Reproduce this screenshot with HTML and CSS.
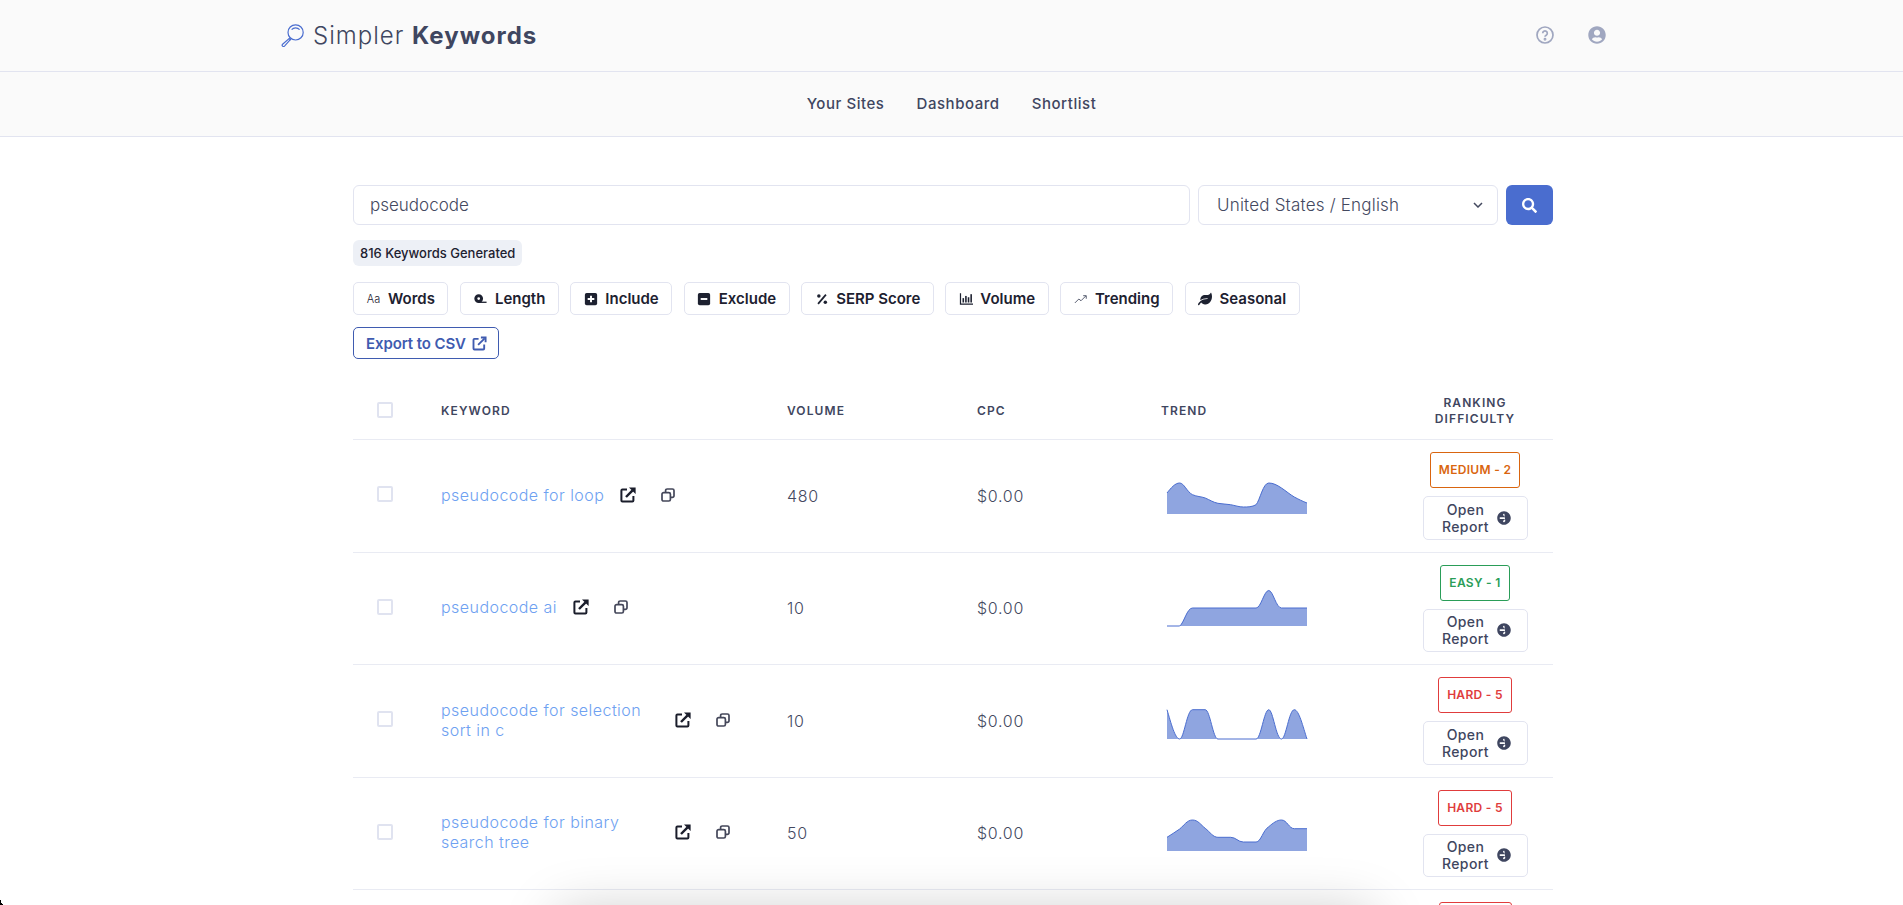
FILE: index.html
```html
<!DOCTYPE html>
<html lang="en">

<head>
    <meta charset="UTF-8">
    <meta name="viewport" content="width=device-width, initial-scale=1.0">
    <title>Simpler Keywords</title>
    <link rel="stylesheet" href="styles.css">
</head>

<body>
    <!-- Top bar -->
    <header class="topbar">
        <a class="logo">
            <svg class="logo-icon" viewBox="0 0 23 23" fill="none" stroke="#4a6dcf" stroke-width="1.2">
                <circle cx="14.6" cy="8.4" r="7.6"/>
                <path d="M10.6 5.6a5.4 5.4 0 0 1 8 0"/>
                <path d="M9.2 13.6l-7.6 6.6a1.3 1.3 0 0 0 1.9 1.9l6.7-7.4"/>
                <path d="M8.2 14.6l1.6 1.6"/>
            </svg>
            <span>Simpler <b>Keywords</b></span>
        </a>
        <div class="topbar-icons">
            <svg class="top-icon" viewBox="0 0 18 18" fill="none" stroke="#a0a7c0" stroke-width="1.7">
                <circle cx="9" cy="9" r="8"/>
                <path d="M6.7 7.2a2.3 2.3 0 1 1 3.5 2c-.8.5-1.2.9-1.2 1.6"/>
                <circle cx="9" cy="13.2" r=".6"/>
            </svg>
            <svg class="top-icon" viewBox="0 0 496 512" fill="#a0a7c0">
                <path d="M248 8C111 8 0 119 0 256s111 248 248 248 248-111 248-248S385 8 248 8zm0 96c48.6 0 88 39.4 88 88s-39.4 88-88 88-88-39.4-88-88 39.4-88 88-88zm0 344c-58.7 0-111.3-26.6-146.5-68.2 18.8-35.4 55.6-59.8 98.5-59.8 2.4 0 4.8.4 7.1 1.1 13 4.2 26.6 6.9 40.9 6.9 14.3 0 28-2.7 40.9-6.9 2.3-.7 4.7-1.1 7.1-1.1 42.9 0 79.7 24.4 98.5 59.8C359.3 421.4 306.7 448 248 448z"/>
            </svg>
        </div>
    </header>

    <nav class="subnav">
        <a>Your Sites</a>
        <a>Dashboard</a>
        <a>Shortlist</a>
    </nav>

    <main class="content">
        <!-- Search -->
        <div class="search-row">
            <input class="search-input" type="text" value="pseudocode">
            <div class="select-wrap">
                <select class="country-select">
                    <option>United States / English</option>
                </select>
                <svg class="chevron" viewBox="0 0 10 6" fill="none" stroke="#44495f" stroke-width="1.5">
                    <path d="M1 1l4 4 4-4"/>
                </svg>
            </div>
            <button class="search-btn">
                <svg viewBox="0 0 512 512" fill="#fff">
                    <path d="M505 442.7L405.3 343c-4.5-4.5-10.6-7-17-7H372c27.6-35.3 44-79.7 44-128C416 93.1 322.9 0 208 0S0 93.1 0 208s93.1 208 208 208c48.3 0 92.7-16.4 128-44v16.3c0 6.4 2.5 12.5 7 17l99.7 99.7c9.4 9.4 24.6 9.4 33.9 0l28.3-28.3c9.4-9.4 9.4-24.6.1-34zM208 336c-70.7 0-128-57.2-128-128 0-70.7 57.2-128 128-128 70.7 0 128 57.2 128 128 0 70.7-57.2 128-128 128z"/>
                </svg>
            </button>
        </div>

        <div class="count-badge">816 Keywords Generated</div>

        <!-- Filters -->
        <div class="filters">
            <button class="filter-btn"><span class="aa">Aa</span>Words</button>
            <button class="filter-btn">
                <svg class="filter-icon" viewBox="0 0 16 16" fill="#1d2130">
                    <path fill-rule="evenodd" d="M6.5 2.5a5 5 0 1 1 0 10 5 5 0 0 1 0-10zm0 3.4a1.6 1.6 0 1 0 0 3.2 1.6 1.6 0 0 0 0-3.2z"/>
                    <rect x="6.5" y="11" width="9" height="1.5"/>
                </svg>Length
            </button>
            <button class="filter-btn">
                <svg class="filter-icon" viewBox="0 0 16 16">
                    <rect x="1" y="1" width="14" height="14" rx="2" fill="#1d2130"/>
                    <path d="M8 4.2v7.6M4.2 8h7.6" stroke="#fff" stroke-width="2.2"/>
                </svg>Include
            </button>
            <button class="filter-btn">
                <svg class="filter-icon" viewBox="0 0 16 16">
                    <rect x="1" y="1" width="14" height="14" rx="2" fill="#1d2130"/>
                    <path d="M4.2 8h7.6" stroke="#fff" stroke-width="2.2"/>
                </svg>Exclude
            </button>
            <button class="filter-btn">
                <svg class="filter-icon" viewBox="0 0 16 16" fill="#1d2130">
                    <path d="M3.5 13.5L12.5 3" stroke="#1d2130" stroke-width="2"/>
                    <circle cx="4.4" cy="4.6" r="2"/>
                    <circle cx="11.8" cy="11.8" r="2"/>
                </svg>SERP Score
            </button>
            <button class="filter-btn">
                <svg class="filter-icon" viewBox="0 0 16 16" fill="#1d2130">
                    <path d="M1 1.5h1.4v11.6H16v1.4H1z"/>
                    <rect x="4" y="7" width="1.8" height="5"/>
                    <rect x="7" y="4.5" width="1.8" height="7.5"/>
                    <rect x="10" y="6" width="1.8" height="6"/>
                    <rect x="13" y="2.5" width="1.8" height="9.5"/>
                </svg>Volume
            </button>
            <button class="filter-btn">
                <svg class="filter-icon" viewBox="0 0 16 16" fill="none" stroke="#44495f" stroke-width="1">
                    <path d="M1 12.5l4.5-4.5 2.5 2 5.5-5.5"/>
                    <path d="M10.5 4.2h3.5v3.5"/>
                </svg>Trending
            </button>
            <button class="filter-btn">
                <svg class="filter-icon" viewBox="0 0 576 512" fill="#1d2130">
                    <path d="M546.2 9.7c-5.6-12.5-21.6-13-28.3-1.2C486.9 62.4 431.4 96 368 96h-80C182 96 96 182 96 288c0 7 .8 13.7 1.5 20.5C161.3 262.8 253.4 224 384 224c8.8 0 16 7.2 16 16s-7.2 16-16 16C132.6 256 26 410.1 2.4 468c-6.6 16.3 1.2 34.9 17.5 41.6 16.4 6.8 35-1.1 41.8-17.3 1.5-3.6 20.9-47.9 71.9-90.6 32.4 43.9 94 85.8 174.9 77.2C465.5 467.5 576 326.7 576 154.3c0-50.2-10.8-102.2-29.8-144.6z"/>
                </svg>Seasonal
            </button>
        </div>

        <button class="export-btn">Export to CSV
            <svg viewBox="0 0 16 16" fill="none" stroke="#3f5bb0" stroke-width="2">
                <path d="M7 3H2.6a1 1 0 0 0-1 1v9.4a1 1 0 0 0 1 1H12a1 1 0 0 0 1-1V9"/>
                <path d="M6.5 9.5L13.5 2.5"/>
                <path d="M9.5 1.6h5v5"/>
            </svg>
        </button>

        <!-- Keywords table -->
        <table class="kw-table">
            <colgroup>
                <col class="col-check">
                <col class="col-keyword">
                <col class="col-volume">
                <col class="col-cpc">
                <col class="col-trend">
                <col class="col-rank">
            </colgroup>
            <thead>
                <tr>
                    <th class="cell-check"><input type="checkbox"></th>
                    <th>Keyword</th>
                    <th>Volume</th>
                    <th>CPC</th>
                    <th>Trend</th>
                    <th class="cell-rank">Ranking Difficulty</th>
                </tr>
            </thead>
            <tbody>
                <tr>
                    <td class="cell-check"><input type="checkbox"></td>
                    <td>
                        <div class="kw-cell">
                            <a class="kw-link">pseudocode for loop</a>
                            <svg class="open-icon" viewBox="0 0 16 16"><use href="#i-open"/></svg>
                            <svg class="copy-icon" viewBox="0 0 14 14"><use href="#i-copy"/></svg>
                        </div>
                    </td>
                    <td>480</td>
                    <td>$0.00</td>
                    <td>
                        <svg class="spark" viewBox="0 0 140 36">
                            <path class="spark-fill" d="M0 36V15C4 10 8 5 12.7 5C17 5 20 14 25.5 16.7C30 18.7 34 18.5 38.2 20C43 22 46 24.3 50.9 25.3C55 26 59 26 63.6 26.7C68 27.5 72 29 76.4 29C81 29 85 29 89.1 26.7C93 22 96 5 101.8 5C106 5 110 7 114.5 10C119 13 123 16.5 127.3 19C131 21 136 23.5 140 25V36Z"/>
                            <path class="spark-line" d="M0 15C4 10 8 5 12.7 5C17 5 20 14 25.5 16.7C30 18.7 34 18.5 38.2 20C43 22 46 24.3 50.9 25.3C55 26 59 26 63.6 26.7C68 27.5 72 29 76.4 29C81 29 85 29 89.1 26.7C93 22 96 5 101.8 5C106 5 110 7 114.5 10C119 13 123 16.5 127.3 19C131 21 136 23.5 140 25"/>
                        </svg>
                    </td>
                    <td class="cell-rank">
                        <div class="rank-badge medium">MEDIUM - 2</div>
                        <button class="report-btn"><span>Open Report</span><svg viewBox="0 0 512 512"><use href="#i-arrow"/></svg></button>
                    </td>
                </tr>
                <tr>
                    <td class="cell-check"><input type="checkbox"></td>
                    <td>
                        <div class="kw-cell">
                            <a class="kw-link">pseudocode ai</a>
                            <svg class="open-icon" viewBox="0 0 16 16"><use href="#i-open"/></svg>
                            <svg class="copy-icon" viewBox="0 0 14 14"><use href="#i-copy"/></svg>
                        </div>
                    </td>
                    <td>10</td>
                    <td>$0.00</td>
                    <td>
                        <svg class="spark" viewBox="0 0 140 36">
                            <path class="spark-fill" d="M0 36H12.7C17 33 20 18 25.5 18H89.1C94 18 97 .5 101.8 .5C106 .5 109 18 114.5 18H140V36Z"/>
                            <path class="spark-line" d="M0 36H12.7C17 33 20 18 25.5 18H89.1C94 18 97 .5 101.8 .5C106 .5 109 18 114.5 18H140"/>
                        </svg>
                    </td>
                    <td class="cell-rank">
                        <div class="rank-badge easy">EASY - 1</div>
                        <button class="report-btn"><span>Open Report</span><svg viewBox="0 0 512 512"><use href="#i-arrow"/></svg></button>
                    </td>
                </tr>
                <tr>
                    <td class="cell-check"><input type="checkbox"></td>
                    <td>
                        <div class="kw-cell">
                            <a class="kw-link wrapped">pseudocode for selection sort in c</a>
                            <svg class="open-icon" viewBox="0 0 16 16"><use href="#i-open"/></svg>
                            <svg class="copy-icon" viewBox="0 0 14 14"><use href="#i-copy"/></svg>
                        </div>
                    </td>
                    <td>10</td>
                    <td>$0.00</td>
                    <td>
                        <svg class="spark" viewBox="0 0 140 36">
                            <path class="spark-fill" d="M0 6.7C4 20 8 36 12.7 36C17 36 20 6.7 25.5 6.7H38.2C43 6.7 46 36 50.9 36H89.1C94 36 97 6.7 101.8 6.7C106 6.7 109 36 114.5 36C119 36 122 6.7 127.3 6.7C132 6.7 136 24 140 36H0Z"/>
                            <path class="spark-line" d="M0 6.7C4 20 8 36 12.7 36C17 36 20 6.7 25.5 6.7H38.2C43 6.7 46 36 50.9 36H89.1C94 36 97 6.7 101.8 6.7C106 6.7 109 36 114.5 36C119 36 122 6.7 127.3 6.7C132 6.7 136 24 140 36"/>
                        </svg>
                    </td>
                    <td class="cell-rank">
                        <div class="rank-badge hard">HARD - 5</div>
                        <button class="report-btn"><span>Open Report</span><svg viewBox="0 0 512 512"><use href="#i-arrow"/></svg></button>
                    </td>
                </tr>
                <tr>
                    <td class="cell-check"><input type="checkbox"></td>
                    <td>
                        <div class="kw-cell">
                            <a class="kw-link wrapped">pseudocode for binary search tree</a>
                            <svg class="open-icon" viewBox="0 0 16 16"><use href="#i-open"/></svg>
                            <svg class="copy-icon" viewBox="0 0 14 14"><use href="#i-copy"/></svg>
                        </div>
                    </td>
                    <td>50</td>
                    <td>$0.00</td>
                    <td>
                        <svg class="spark" viewBox="0 0 140 36">
                            <path class="spark-fill" d="M0 36V22.3C4 20 8 17 12.7 14C17 10.5 20 5 25.5 5C31 5 34 10 38.2 13.3C43 17 46 22.3 50.9 22.3H63.6C69 22.3 71 27 76.4 27H89.1C94 27 96 15 101.8 11.7C106 8 110 5 114.5 5C120 5 122 13.7 127.3 13.7H140V36Z"/>
                            <path class="spark-line" d="M0 22.3C4 20 8 17 12.7 14C17 10.5 20 5 25.5 5C31 5 34 10 38.2 13.3C43 17 46 22.3 50.9 22.3H63.6C69 22.3 71 27 76.4 27H89.1C94 27 96 15 101.8 11.7C106 8 110 5 114.5 5C120 5 122 13.7 127.3 13.7H140"/>
                        </svg>
                    </td>
                    <td class="cell-rank">
                        <div class="rank-badge hard">HARD - 5</div>
                        <button class="report-btn"><span>Open Report</span><svg viewBox="0 0 512 512"><use href="#i-arrow"/></svg></button>
                    </td>
                </tr>
                <tr>
                    <td class="cell-check"></td>
                    <td></td>
                    <td></td>
                    <td></td>
                    <td></td>
                    <td class="cell-rank">
                        <!-- only the top edge of this badge is in the shot -->
                        <div class="rank-badge hard next-row"></div>
                    </td>
                </tr>
            </tbody>
        </table>
    </main>

    <!-- Shared icons -->
    <svg class="icon-defs">
        <defs>
            <g id="i-open">
                <path d="M7 2.6H2.4a1 1 0 0 0-1 1v10a1 1 0 0 0 1 1h10a1 1 0 0 0 1-1V9" fill="none" stroke="#1a1d2b" stroke-width="2"/>
                <path d="M6 10L12.6 3.4" fill="none" stroke="#1a1d2b" stroke-width="2.4"/>
                <path d="M9 .4h6.6V7z" fill="#1a1d2b"/>
            </g>
            <g id="i-copy" fill="none" stroke="#44475a" stroke-width="1.7">
                <rect x="1" y="4.6" width="8.4" height="8.4" rx="1.6"/>
                <path d="M4.6 4.6V2.6A1.6 1.6 0 0 1 6.2 1h5.2A1.6 1.6 0 0 1 13 2.6v5.2a1.6 1.6 0 0 1-1.6 1.6H9.4"/>
            </g>
            <path id="i-arrow" fill="#3f4660" d="M256 8c137 0 248 111 248 248S393 504 256 504 8 393 8 256 119 8 256 8zm-28.9 143.6l75.5 72.4H120c-13.3 0-24 10.7-24 24v16c0 13.3 10.7 24 24 24h182.6l-75.5 72.4c-9.7 9.3-9.9 24.8-.4 34.3l11 10.9c9.4 9.4 24.6 9.4 33.9 0l28.3-28.3c9.4-9.4 9.4-24.6 0-33.9L271.6 106.3c-9.4-9.4-24.6-9.4-33.9 0l-11 10.9c-9.5 9.6-9.3 25.1.4 34.4z"/>
        </defs>
    </svg>

    <!-- Dialog below the fold, only its shadow shows -->
    <div class="peek-shadow"></div>
    <div class="window-corner"></div>
</body>

</html>
```

FILE: styles.css
```css
* {
    margin: 0;
    padding: 0;
    box-sizing: border-box;
}

html, body {
    height: 100%;
    overflow: hidden;
}

body {
    background-color: #fff;
    color: #3f4660;
    font-family: "Inter", "Liberation Sans", sans-serif;
}

/* top bar */
.topbar {
    height: 72px;
    background-color: #fafafa;
    border-bottom: 1px solid #e2e4f0;
    display: flex;
    align-items: center;
    justify-content: space-between;
    padding: 0 297px 0 281px;
}

.logo {
    display: flex;
    align-items: center;
    gap: 9px;
    font-size: 24px;
    font-weight: 300;
    letter-spacing: 1px;
    color: #3f4660;
}

.logo b {
    font-weight: 700;
}

.logo-icon {
    width: 23px;
    height: 23px;
}

.topbar-icons {
    display: flex;
    gap: 34px;
    margin-bottom: 2px;
}

.top-icon {
    width: 18px;
    height: 18px;
    display: block;
}

.subnav {
    height: 65px;
    padding-bottom: 2px;
    background-color: #fafafa;
    border-bottom: 1px solid #e2e4f0;
    display: flex;
    align-items: center;
    justify-content: center;
    gap: 32px;
    font-size: 15px;
    font-weight: 500;
    letter-spacing: 0.55px;
    color: #3f4660;
}

/* page content */
.content {
    width: 1200px;
    margin-left: 353px;
    padding-top: 48px;
}

.search-row {
    display: flex;
    gap: 8px;
}

.search-input {
    flex: 1;
    height: 40px;
    padding: 0 16px;
    border: 1px solid #e2e4f0;
    border-radius: 6px;
    font-family: inherit;
    font-size: 17px;
    font-weight: 300;
    color: #44495f;
    outline: none;
}

.select-wrap {
    position: relative;
    width: 300px;
}

.country-select {
    width: 100%;
    height: 40px;
    padding: 0 18px;
    border: 1px solid #e2e4f0;
    border-radius: 6px;
    background: #fff;
    appearance: none;
    font-family: inherit;
    font-size: 17px;
    font-weight: 300;
    letter-spacing: 0.2px;
    color: #44495f;
}

.chevron {
    position: absolute;
    right: 15px;
    top: 17px;
    width: 10px;
    height: 6px;
}

.search-btn {
    width: 47px;
    height: 40px;
    border: none;
    border-radius: 6px;
    background-color: #4a6dcf;
    display: flex;
    align-items: center;
    justify-content: center;
}

.search-btn svg {
    width: 15px;
    height: 15px;
}

.count-badge {
    display: inline-block;
    margin-top: 15px;
    height: 26px;
    line-height: 26px;
    padding: 0 7px;
    border-radius: 6px;
    background-color: #edf0f6;
    font-size: 13px;
    font-weight: 500;
    color: #1d2130;
}

/* filter buttons */
.filters {
    display: flex;
    gap: 11.5px;
    margin-top: 16px;
}

.filter-btn {
    height: 33px;
    padding: 0 12.5px;
    display: flex;
    align-items: center;
    gap: 7.5px;
    background: #fff;
    border: 1px solid #e2e4f0;
    border-radius: 5px;
    font-family: inherit;
    font-size: 15px;
    font-weight: 600;
    color: #1d2130;
}

.filter-icon {
    width: 14px;
    height: 14px;
}

.aa {
    font-size: 11px;
    font-weight: 300;
    width: 14px;
}

.export-btn {
    height: 32px;
    margin-top: 12px;
    padding: 0 11px 0 12px;
    display: flex;
    align-items: center;
    gap: 6px;
    background: #fff;
    border: 1px solid #3f5bb0;
    border-radius: 5px;
    font-family: inherit;
    font-size: 15px;
    font-weight: 600;
    letter-spacing: -0.1px;
    color: #3f5bb0;
}

.export-btn svg {
    width: 15px;
    height: 15px;
}

/* table */
.kw-table {
    width: 1200px;
    margin-top: 24px;
    border-collapse: collapse;
    table-layout: fixed;
}

.col-check { width: 76px; }
.col-keyword { width: 346px; }
.col-volume { width: 190px; }
.col-cpc { width: 184px; }
.col-trend { width: 248px; }
.col-rank { width: 156px; }

.kw-table th {
    padding: 12px;
    text-align: left;
    font-size: 12px;
    font-weight: 600;
    line-height: 16px;
    letter-spacing: 1.1px;
    text-transform: uppercase;
    color: #3f4660;
    border-bottom: 1px solid #e9ebf3;
}

.kw-table td {
    padding: 12px;
    font-size: 16px;
    font-weight: 300;
    letter-spacing: 0.7px;
    line-height: 20px;
    color: #44495f;
    border-bottom: 1px solid #e9ebf3;
    vertical-align: middle;
}

.kw-table .cell-check {
    padding-left: 24px;
}

.kw-table .cell-rank {
    text-align: center;
}

.cell-check input {
    appearance: none;
    display: block;
    width: 16px;
    height: 16px;
    margin-bottom: 3px;
    border: 2px solid #e0e3f0;
    border-radius: 2px;
    background: #fff;
}

.kw-cell {
    display: flex;
    align-items: center;
    margin-bottom: 2px;
}

.kw-link {
    color: #6ea1f1;
    font-weight: 350;
    letter-spacing: 0.45px;
}

.kw-link.wrapped {
    width: 218px;
}

.open-icon {
    width: 16px;
    height: 16px;
    margin-left: 16px;
    flex-shrink: 0;
}

.copy-icon {
    width: 14px;
    height: 14px;
    margin-left: 25px;
    flex-shrink: 0;
}

.spark {
    display: block;
    width: 140px;
    height: 36px;
    margin-left: 6px;
    overflow: visible;
}

.spark-fill {
    fill: #8fa5e0;
}

.spark-line {
    fill: none;
    stroke: #4a6dcf;
    stroke-width: 1;
}

.rank-badge {
    display: block;
    width: fit-content;
    height: 36px;
    line-height: 34px;
    margin: 0 auto;
    padding: 0 8px;
    border: 1px solid;
    border-radius: 3px;
    font-size: 12px;
    font-weight: 600;
    letter-spacing: 0.3px;
}

.rank-badge.medium { color: #d9650f; border-color: #d9650f; }
.rank-badge.easy { color: #2a9d58; border-color: #2a9d58; }
.rank-badge.hard { color: #e03c3c; border-color: #e03c3c; }
.rank-badge.next-row { width: 73px; }

.report-btn {
    width: 105px;
    height: 43.5px;
    margin: 8px auto 0;
    padding: 0 16px 0 14px;
    display: flex;
    align-items: center;
    justify-content: space-between;
    background: #fff;
    border: 1px solid #e2e4f0;
    border-radius: 5px;
    font-family: inherit;
    font-size: 14px;
    font-weight: 500;
    line-height: 17px;
    letter-spacing: 0.4px;
    color: #3f4660;
}

.report-btn span {
    width: 56px;
}

.report-btn svg {
    width: 14px;
    height: 14px;
    flex-shrink: 0;
}

.icon-defs {
    position: absolute;
    width: 0;
    height: 0;
}

/* overlays along the bottom edge of the shot */
.peek-shadow {
    position: fixed;
    left: 570px;
    width: 790px;
    top: 925px;
    height: 40px;
    box-shadow: 0 0 55px 12px rgba(0, 0, 0, 0.22);
}

.window-corner {
    position: fixed;
    left: 0;
    bottom: 0;
    width: 4px;
    height: 9px;
    background: radial-gradient(4px 9px at 100% 0, transparent 98%, #000 100%);
}
```
